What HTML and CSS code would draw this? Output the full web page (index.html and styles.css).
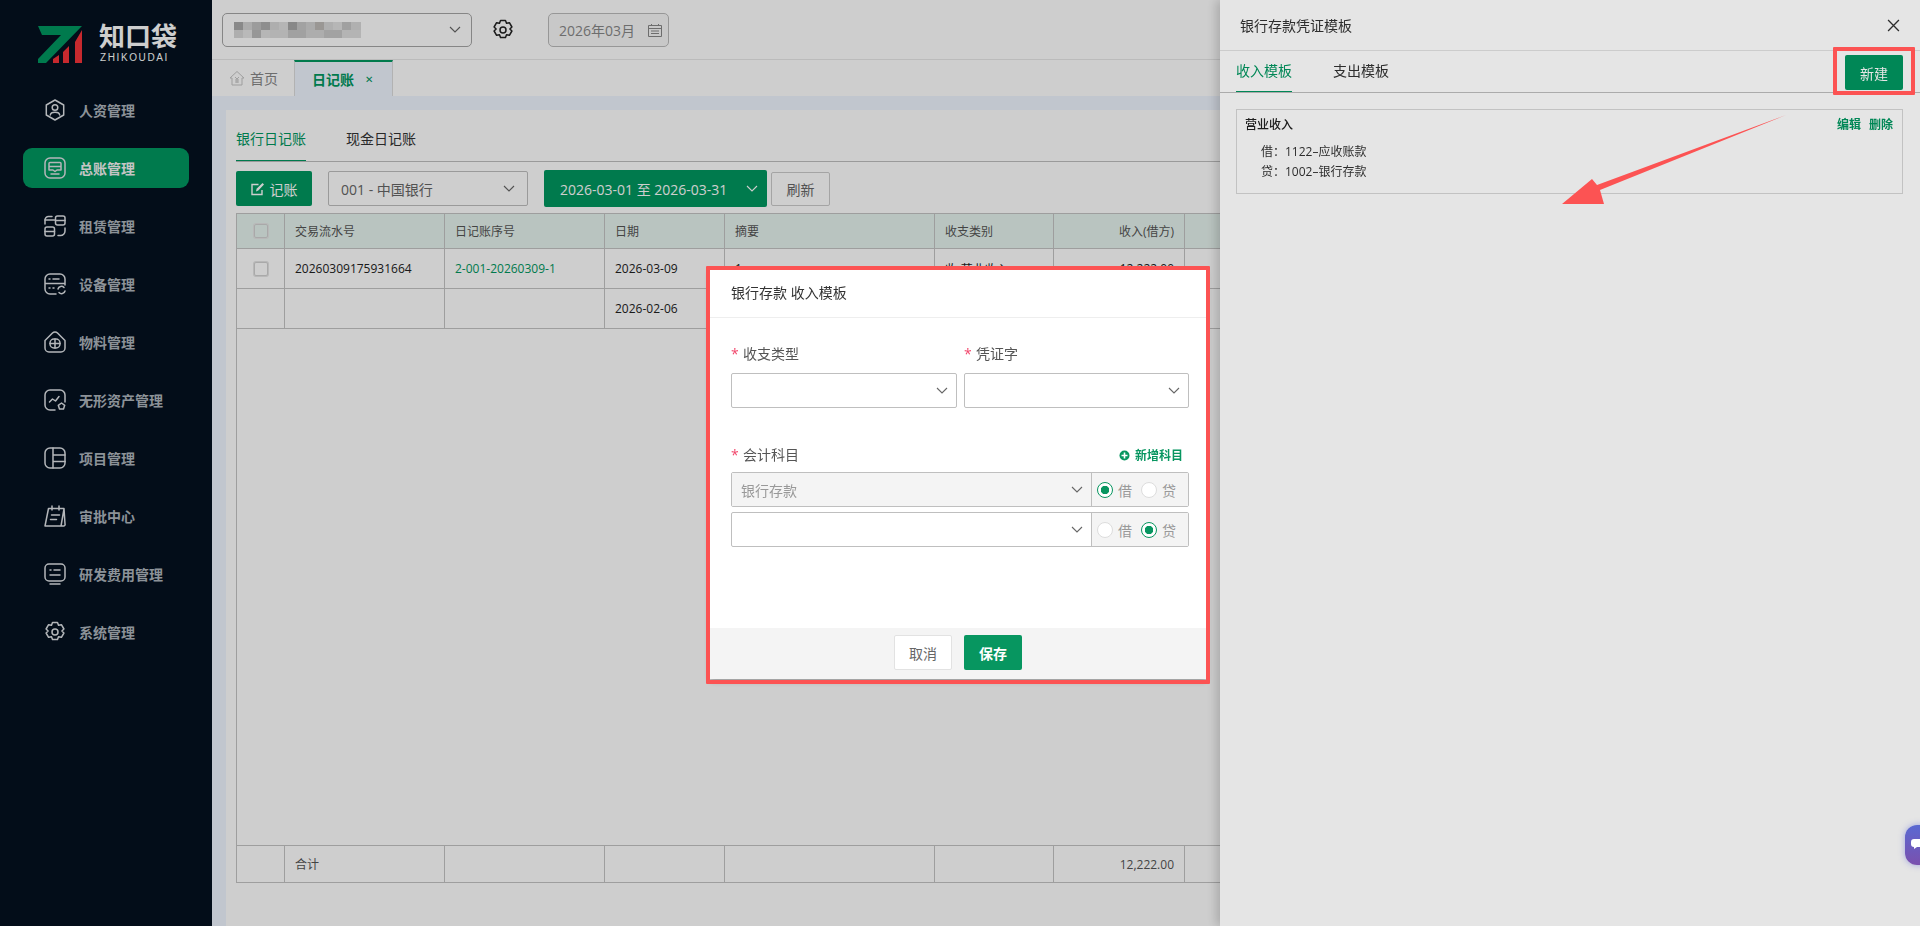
FILE: index.html
```html
<!DOCTYPE html>
<html lang="zh-CN">
<head>
<meta charset="utf-8">
<title>日记账</title>
<link rel="stylesheet" href="styles.css">
</head>
<body>
<svg class="defs" width="0" height="0" aria-hidden="true">
  <symbol id="chev" viewBox="0 0 12 7"><path d="M1 1l5 5 5-5" fill="none" stroke="currentColor" stroke-width="1.1"/></symbol>
</svg>

<div class="app">
  <aside class="sidebar">
    <div class="logo">
      <svg class="logo-mark" width="46" height="39" viewBox="0 0 46 39">
        <path d="M0 1H44L8 38H0V34L23 10H4Z" fill="#009760"/>
        <path d="M15 38V34L21 30V38Z M25 38V27L31 21V38Z M37 38V17L44 5V38Z" fill="#f7333a"/>
      </svg>
      <div class="logo-text">
        <div class="logo-cn">知口袋</div>
        <div class="logo-en">ZHIKOUDAI</div>
      </div>
    </div>
    <nav class="menu">
      <a class="menu-item"><svg class="mi" viewBox="0 0 22 22"><path d="M11 1l8.7 5v10L11 21l-8.7-5V6z"/><circle cx="11" cy="8.5" r="2.8"/><path d="M6.3 16c.4-3.6 9-3.6 9.4 0"/></svg>人资管理</a>
      <a class="menu-item active"><svg class="mi" viewBox="0 0 22 22"><rect x="1" y="1" width="20" height="20" rx="5"/><path d="M5 6.5a1 1 0 0 1 1-1h10a1 1 0 0 1 1 1V13h-4l-2 1.5L9 13H5zM5 9.5h12M7 17h8"/></svg>总账管理</a>
      <a class="menu-item"><svg class="mi" viewBox="0 0 22 22"><rect x="11.5" y="1" width="9.5" height="9" rx="2"/><path d="M11.5 5.5H21M1 5h9.5"/><rect x="1" y="12" width="9.5" height="9" rx="2"/><path d="M1 16.5h9.5M1 9V5a3.5 3.5 0 0 1 3.500-3.500H8M21 13v3a4.500 4.500 0 0 1-4.500 4.500H14"/></svg>租赁管理</a>
      <a class="menu-item"><svg class="mi" viewBox="0 0 22 22"><path d="M12 21H6a5 5 0 0 1-5-5V6a5 5 0 0 1 5-5h10a5 5 0 0 1 5 5v6M1 10.500h20M5 6h1M9 6h6M5 15h1M9 15h1M14 16a3.500 3.500 0 0 1 6-1.500M21 18a3.500 3.500 0 0 1-6 1.500"/></svg>设备管理</a>
      <a class="menu-item"><svg class="mi" viewBox="0 0 22 22"><path d="M1 9.500L8.500 2a3.500 3.500 0 0 1 5 0L21 9.500V17a4 4 0 0 1-4 4H5a4 4 0 0 1-4-4z"/><rect x="6" y="8" width="10" height="9" rx="4"/><path d="M6 12.500h10M11 8v9"/></svg>物料管理</a>
      <a class="menu-item"><svg class="mi" viewBox="0 0 22 22"><path d="M11 21H6a5 5 0 0 1-5-5V6a5 5 0 0 1 5-5h10a5 5 0 0 1 5 5v7"/><path d="M5.500 13l3-3 3 2 3.500-4.500"/><path d="M17.500 14l3.200 2.300-1.200 3.700h-4l-1.200-3.700z"/></svg>无形资产管理</a>
      <a class="menu-item"><svg class="mi" viewBox="0 0 22 22"><rect x="1" y="1" width="20" height="20" rx="5"/><path d="M9 1v20M9 8h12M9 14.500h12"/></svg>项目管理</a>
      <a class="menu-item"><svg class="mi" viewBox="0 0 22 22"><path d="M4.500 3.500H20L21 19a1.500 1.500 0 0 1-1.500 2H1zM20 4l-3 17M8 1v4M15 1v4M7.500 10h8M6.500 14.500h6"/></svg>审批中心</a>
      <a class="menu-item"><svg class="mi" viewBox="0 0 22 22"><rect x="1" y="1" width="20" height="17" rx="4"/><path d="M6 7h1M10 7h6M6 12h10M6 21h10"/></svg>研发费用管理</a>
      <a class="menu-item"><svg class="mi" viewBox="0 0 22 22"><path d="M8.500 1.500h5l1 2.800 2.900-.6 2.500 4.300-2 2 2 2-2.500 4.300-2.900-.6-1 2.800h-5l-1-2.800-2.900.6-2.500-4.300 2-2-2-2 2.500-4.300 2.900.6z" stroke-linejoin="round"/><circle cx="11" cy="11" r="3"/></svg>系统管理</a>
    </nav>
  </aside>

  <main class="main">
    <header class="topbar">
      <div class="company"><span class="mosaic"></span><svg class="chev"><use href="#chev"/></svg></div>
      <svg class="gear" viewBox="0 0 22 22"><path d="M8.500 1.500h5l1 2.800 2.900-.6 2.500 4.300-2 2 2 2-2.500 4.300-2.900-.6-1 2.800h-5l-1-2.800-2.900.6-2.500-4.300 2-2-2-2 2.500-4.300 2.900.6z" stroke-linejoin="round"/><circle cx="11" cy="11" r="3"/></svg>
      <div class="month"><span>2026年03月</span><svg class="cal" viewBox="0 0 14 14"><path d="M.5 2.500h13v11H.5zM.5 5.500h13M3.500 1v2M10.500 1v2M3 8h8M3 10.500h8" /></svg></div>
    </header>

    <div class="tabbar">
      <div class="tab home"><svg class="home-ico" viewBox="0 0 16 16"><path d="M1 8l7-6.500L15 8h-2v7H3V8zM6 7l2 2 2-2M8 9v4M6 10h4M6 12h4"/></svg>首页</div>
      <div class="tab current">日记账<span class="tab-x">✕</span></div>
    </div>

    <div class="content">
      <section class="card">
        <div class="subtabs">
          <div class="subtab on">银行日记账</div>
          <div class="subtab">现金日记账</div>
        </div>
        <div class="toolbar">
          <button class="btn primary"><svg class="edit" viewBox="0 0 14 14"><path d="M11 8v4.500H1v-10h6.500"/><path d="M5 9.500l.6-2.800L11.500 1 13 2.500 7.300 8.400z" fill="currentColor" stroke="none"/></svg>记账</button>
          <div class="sel bank"><span>001 - 中国银行</span><svg class="chev"><use href="#chev"/></svg></div>
          <div class="range"><span>2026-03-01 至 2026-03-31</span><svg class="chev"><use href="#chev"/></svg></div>
          <button class="btn plain">刷新</button>
        </div>
        <div class="tbl">
          <div class="row head">
            <div class="c chk"><i class="box"></i></div><div class="c">交易流水号</div><div class="c">日记账序号</div><div class="c">日期</div><div class="c">摘要</div><div class="c">收支类别</div><div class="c r">收入(借方)</div><div class="c"></div>
          </div>
          <div class="row body">
            <div class="c chk"><i class="box"></i></div><div class="c">20260309175931664</div><div class="c link">2-001-20260309-1</div><div class="c">2026-03-09</div><div class="c">1</div><div class="c">收-营业收入</div><div class="c r">12,222.00</div><div class="c"></div>
          </div>
          <div class="row body">
            <div class="c chk"></div><div class="c"></div><div class="c"></div><div class="c">2026-02-06</div><div class="c"></div><div class="c"></div><div class="c"></div><div class="c"></div>
          </div>
          <div class="tbl-fill"></div>
          <div class="row foot">
            <div class="c chk"></div><div class="c">合计</div><div class="c"></div><div class="c"></div><div class="c"></div><div class="c"></div><div class="c r">12,222.00</div><div class="c"></div>
          </div>
        </div>
      </section>
    </div>
  </main>
</div>

<div class="mask"></div>

<aside class="panel">
  <div class="panel-head"><span>银行存款凭证模板</span><svg class="panel-x" viewBox="0 0 12 12"><path d="M1 1l10 10M11 1L1 11"/></svg></div>
  <div class="panel-tabs">
    <div class="ptab on">收入模板</div>
    <div class="ptab">支出模板</div>
    <button class="btn new">新建</button>
  </div>
  <div class="tpl">
    <div class="tpl-top"><b>营业收入</b><span class="tpl-acts"><a>编辑</a><a>删除</a></span></div>
    <div class="tpl-line">借：1122–应收账款</div>
    <div class="tpl-line">贷：1002–银行存款</div>
  </div>
</aside>

<div class="mask"></div>

<section class="modal">
  <div class="modal-head">银行存款 收入模板</div>
  <div class="modal-body">
    <div class="two">
      <div class="field">
        <label class="lab"><em>*</em>收支类型</label>
        <div class="sel"><span></span><svg class="chev"><use href="#chev"/></svg></div>
      </div>
      <div class="field">
        <label class="lab"><em>*</em>凭证字</label>
        <div class="sel"><span></span><svg class="chev"><use href="#chev"/></svg></div>
      </div>
    </div>
    <div class="acct-head">
      <label class="lab"><em>*</em>会计科目</label>
      <a class="add"><svg width="11" height="11" viewBox="0 0 11 11"><circle cx="5.500" cy="5.500" r="5" fill="#079660"/><path d="M5.500 2.500v6M2.500 5.500h6" stroke="#fff" stroke-width="1.600"/></svg>新增科目</a>
    </div>
    <div class="acct disabled">
      <div class="acct-sel"><span>银行存款</span><svg class="chev"><use href="#chev"/></svg></div>
      <div class="radios"><span class="rd"><i class="dot on"></i>借</span><span class="rd"><i class="dot"></i>贷</span></div>
    </div>
    <div class="acct">
      <div class="acct-sel"><span></span><svg class="chev"><use href="#chev"/></svg></div>
      <div class="radios"><span class="rd"><i class="dot"></i>借</span><span class="rd"><i class="dot on"></i>贷</span></div>
    </div>
  </div>
  <div class="modal-foot">
    <button class="btn cancel">取消</button>
    <button class="btn save">保存</button>
  </div>
</section>

<div class="note note-modal"></div>
<div class="note note-new"></div>
<svg class="arrow" width="240" height="100" viewBox="0 0 240 100"><path d="M226 3L40 78 44 92 2 92 32 67 37 73Z" fill="#fc5353"/></svg>
<div class="chat"><svg width="12" height="11" viewBox="0 0 12 11"><path d="M3 0h9v8H6L3 10V8H3a3 3 0 0 1-3-3V3a3 3 0 0 1 3-3z" fill="#fff"/></svg></div>
</body>
</html>
```
FILE: styles.css
```css
* { box-sizing: border-box; }
html, body { margin: 0; height: 100%; overflow: hidden; }
body { font-family: "Open Sans", "Noto Sans CJK SC", sans-serif; font-size: 12px; color: #333; background: #fff; }
button { font: inherit; cursor: pointer; }
.defs { position: absolute; }
.chev { width: 12px; height: 7px; color: #666; flex: none; display: block; }

.app { display: flex; height: 926px; }

/* sidebar */
.sidebar { width: 212px; flex: none; background: #041120; }
.logo { display: flex; align-items: flex-start; padding: 25px 0 0 38px; height: 81px; gap: 15px; }
.logo-mark { display: block; flex: none; }
.logo-text { color: #fff; margin-top: -3px; }
.logo-cn { font-size: 26px; line-height: 29px; font-weight: 700; white-space: nowrap; letter-spacing: 0; }
.logo-en { font-size: 10px; line-height: 11px; letter-spacing: 1.6px; margin-top: 1px; margin-left: 1px; font-family: "Liberation Sans", sans-serif; }
.menu { display: flex; flex-direction: column; gap: 18px; padding: 9px 23px 0; }
.menu-item { height: 40px; width: 166px; border-radius: 9px; display: flex; align-items: center; padding-left: 21px; gap: 13px; color: #aeb5bd; font-size: 14px; font-weight: 700; }
.menu-item.active { background: #009760; color: #f4f4f4; }
.mi { width: 22px; height: 22px; flex: none; fill: none; stroke: #dfe2e6; stroke-width: 1.5; stroke-linecap: round; stroke-linejoin: round; }

/* main */
.main { flex: 1; min-width: 0; display: flex; flex-direction: column; background: #eff5ff; }
.topbar { height: 60px; flex: none; background: #fff; border-bottom: 1px solid #e8e8e8; display: flex; align-items: center; padding: 0 0 0 10px; }
.company { width: 250px; height: 34px; border: 1px solid #a6a6a6; border-radius: 5px; display: flex; align-items: center; justify-content: space-between; padding: 0 10px 0 11px; margin-bottom: 0; }
.mosaic { width: 127px; height: 16px; background:
  linear-gradient(90deg, #aaa 0 9px, #d5d5d5 9px 18px, #c2c2c2 18px 27px, #b0b0b0 27px 36px, #d8d8d8 36px 45px, #e0e0e0 45px 54px, #a9a9a9 54px 63px, #c9c9c9 63px 72px, #d4d4d4 72px 81px, #bfbbb8 81px 90px, #d9d9d9 90px 99px, #e2e2e2 99px 108px, #c6c6c6 108px 117px, #dadada 117px 127px) 0 0 / 100% 8px no-repeat,
  linear-gradient(90deg, #d8d8d8 0 9px, #e6e6e6 9px 18px, #bbb 18px 27px, #e2e2e2 27px 36px, #dedede 36px 54px, #c8c8c8 54px 72px, #d6d6d6 72px 90px, #c9c9c9 90px 108px, #dfdfdf 108px 127px) 0 8px / 100% 8px no-repeat;
  filter: blur(.4px); }
.gear { width: 22px; height: 22px; margin-left: 20px; fill: none; stroke: #222; stroke-width: 1.500; }
.month { width: 121px; height: 34px; margin-left: 34px; background: #f8f8f8; border: 1px solid #bbb; border-radius: 5px; display: flex; align-items: center; justify-content: space-between; padding: 0 6px 0 10px; font-size: 14px; color: #888; }
.cal { width: 14px; height: 14px; fill: none; stroke: #888; stroke-width: 1; }

.tabbar { height: 36px; flex: none; background: #fff; display: flex; }
.tab { font-size: 14px; display: flex; align-items: center; color: #888; }
.home { width: 82px; padding-left: 17px; gap: 5px; }
.home-ico { width: 16px; height: 16px; fill: none; stroke: #c5c5c5; stroke-width: 1; }
.current { width: 99px; background: #eff5ff; border: 1px solid #ddd; border-width: 0 1px; border-top: 2px solid #009760; padding-left: 17px; color: #009760; font-weight: 700; }
.tab-x { font-size: 10px; margin-left: 11px; font-weight: 400; font-family: "DejaVu Sans", sans-serif; }

.content { flex: 1; min-height: 0; padding: 14px 0 0 14px; }
.card { height: 100%; background: #fff; padding: 10px 0 0 10px; }
.subtabs { display: flex; gap: 40px; height: 42px; border-bottom: 1px solid #bfbfbf; }
.subtab { font-size: 14px; line-height: 38px; height: 41px; color: #333; }
.subtab.on { color: #009760; border-bottom: 1px solid #009760; }

.toolbar { display: flex; align-items: center; height: 37px; margin-top: 8px; }
.btn { border: 0; height: 35px; border-radius: 2px; }
.primary { width: 76px; background: #009760; color: #fff; font-size: 14px; display: flex; align-items: center; justify-content: center; gap: 5px; }
.edit { width: 14px; height: 14px; fill: none; stroke: currentColor; stroke-width: 1.400; }
.sel { height: 35px; border: 1px solid #bfbfbf; border-radius: 2px; display: flex; align-items: center; justify-content: space-between; padding: 0 12px 0 12px; font-size: 14px; color: #666; background: #fff; }
.bank { width: 200px; margin-left: 16px; }
.range { width: 223px; height: 37px; margin-left: 16px; background: #009760; border-radius: 2px; color: #fff; font-size: 14px; display: flex; align-items: center; justify-content: space-between; padding: 0 9px 0 16px; }
.range .chev { color: #fff; }
.plain { width: 59px; height: 34px; margin-left: 4px; background: #fff; border: 1px solid #ccc; color: #666; font-size: 14px; }

.tbl { margin-top: 6px; height: 670px; display: flex; flex-direction: column; border: 1px solid #c4c4c4; border-right: 0; }
.row { display: grid; grid-template-columns: 48px 160px 160px 120px 210px 119px 131px 1fr; border-bottom: 1px solid #c4c4c4; flex: none; }
.head { height: 35px; background: #e6f3ee; color: #555; }
.body { height: 40px; color: #222; }
.foot { height: 37px; border-bottom: 0; border-top: 1px solid #c4c4c4; color: #555; }
.tbl-fill { flex: 1; }
.c { border-right: 1px solid #c4c4c4; padding: 0 10px; display: flex; align-items: center; white-space: nowrap; font-size: 12px; }
.c.r { justify-content: flex-end; }
.c.chk { justify-content: center; padding: 0; }
.link { color: #009760; }
.box { width: 14px; height: 14px; border: 1px solid #d2d2d2; border-radius: 2px; background: #fff; display: block; box-shadow: 0 0 0 1px #e4e4e4; }
.head .box { background: transparent; }

/* overlays */
.mask { position: fixed; inset: 0; background: rgba(0, 0, 0, .1); }
.panel { position: fixed; top: 0; right: 0; bottom: 0; width: 700px; background: #fff; box-shadow: -4px 0 10px rgba(0, 0, 0, .18); padding: 0; }
.panel-head { height: 51px; border-bottom: 1px solid #e4e4e4; display: flex; align-items: center; justify-content: space-between; padding: 0 20px 0 20px; font-size: 14px; color: #333; }
.panel-x { width: 13px; height: 13px; fill: none; stroke: #333; stroke-width: 1.200; }
.panel-tabs { height: 42px; margin-left: 0; border-bottom: 1px solid #bfbfbf; display: flex; padding: 0 17px 0 16px; gap: 41px; align-items: flex-start; }
.ptab { font-size: 14px; height: 41px; line-height: 40px; padding-top: 0; color: #333; }
.ptab.on { color: #009760; border-bottom: 1px solid #009760; }
.new { margin-left: auto; margin-top: 4px; width: 58px; background: #009760; color: #fff; font-size: 14px; position: relative; }
.tpl { margin: 16px 17px 0 16px; height: 85px; border: 1px solid #d8d8d8; padding: 6px 9px 0 8px; }
.tpl-top { display: flex; justify-content: space-between; line-height: 17px; margin-bottom: 9px; }
.tpl-top b { font-weight: 500; color: #222; }
.tpl-acts { display: flex; gap: 8px; font-weight: 700; color: #009760; }
.tpl-line { padding-left: 16px; line-height: 20px; color: #333; font-size: 12px; }

.modal { position: fixed; left: 710px; top: 270px; width: 496px; height: 409px; background: #fff; display: flex; flex-direction: column; box-shadow: 0 2px 6px rgba(0, 0, 0, .3); }
.modal-head { height: 48px; flex: none; border-bottom: 1px solid #eee; padding-left: 21px; line-height: 46px; font-size: 14px; color: #333; }
.modal-body { flex: 1; padding: 26px 17px 0 21px; }
.two { display: flex; gap: 7px; }
.field { width: 226px; }
.field + .field { width: 225px; }
.lab { display: block; font-size: 14px; line-height: 20px; color: #555; }
.lab em { color: #f2476c; font-style: normal; display: inline-block; width: 12px; }
.field .sel { margin-top: 9px; height: 35px; padding-right: 8px; }
.acct-head { display: flex; justify-content: space-between; align-items: center; margin-top: 37px; height: 20px; margin-bottom: 7px; }
.add { display: flex; align-items: center; gap: 5px; color: #079660; font-weight: 700; font-size: 12px; padding-right: 6px; }
.acct { display: flex; height: 35px; border: 1px solid #bfbfbf; border-radius: 2px; margin-bottom: 5px; width: 458px; }
.acct-sel { flex: 1; display: flex; align-items: center; justify-content: space-between; padding: 0 8px 0 9px; font-size: 14px; color: #999; }
.disabled .acct-sel { background: #f4f4f4; }
.radios { width: 97px; border-left: 1px solid #bfbfbf; background: #f4f4f4; display: flex; padding-left: 5px; gap: 9px; align-items: center; }
.rd { display: flex; align-items: center; gap: 5px; font-size: 14px; color: #999; }
.dot { width: 16px; height: 16px; border: 1px solid #ddd; border-radius: 50%; background: #fff; display: block; flex: none; }
.dot.on { border-color: #079660; background: radial-gradient(circle, #079660 0 4px, #fff 4.500px); }
.modal-foot { height: 51px; flex: none; background: #f4f4f4; display: flex; justify-content: center; align-items: center; gap: 12px; padding-right: 0; padding-bottom: 2px; }
.cancel { width: 58px; background: #fff; border: 1px solid #e2e2e2; color: #666; font-size: 14px; }
.save { width: 58px; background: #079660; color: #fff; font-size: 14px; font-weight: 700; }

/* screenshot annotations */
.note { position: fixed; border: 4px solid #fc5353; border-radius: 1px; }
.note-modal { left: 706px; top: 266px; width: 504px; height: 418px; }
.note-new { left: 1833px; top: 47px; width: 82px; height: 48px; }
.arrow { position: fixed; left: 1560px; top: 112px; }
.chat { position: fixed; left: 1905px; top: 825px; width: 30px; height: 40px; border-radius: 12px; background: linear-gradient(180deg, #5a69d2, #7a50ae); box-shadow: 0 0 6px rgba(90, 100, 220, .5); padding: 14px 0 0 6px; }
.chat svg { display: block; }
```
